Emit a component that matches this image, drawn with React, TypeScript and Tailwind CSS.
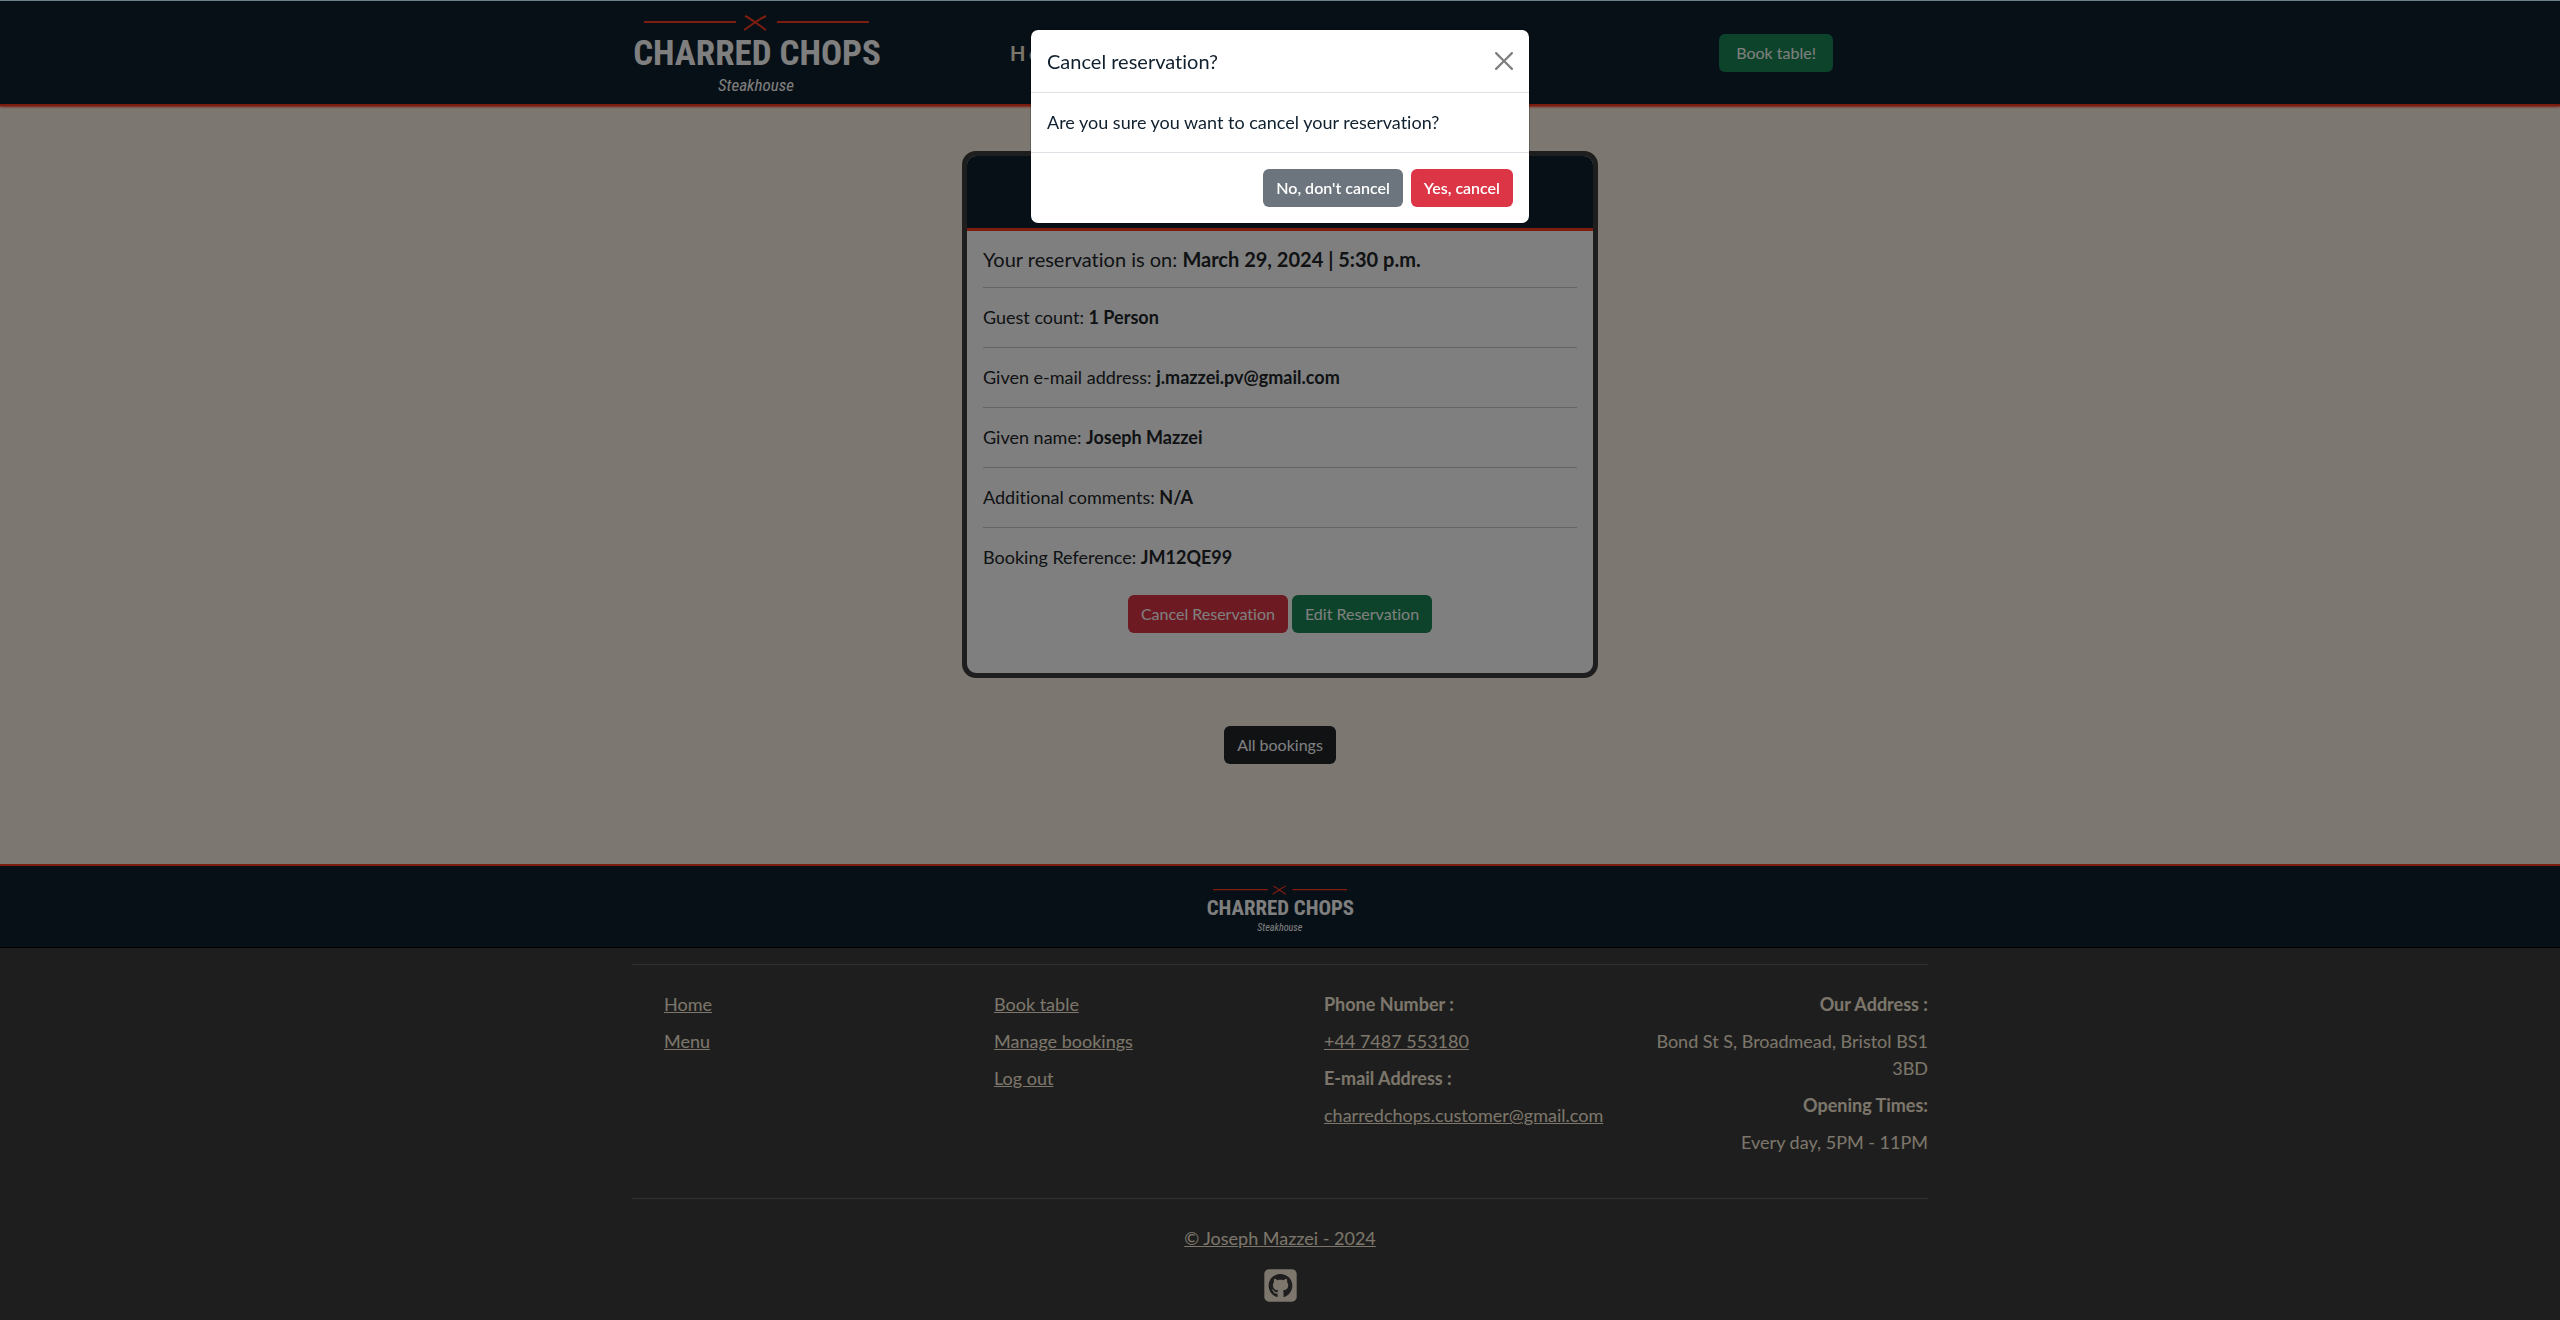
import React from "react";
import { FaSquareGithub } from "react-icons/fa6";

function Logo({ className }: { className: string }) {
  return (
    <svg viewBox="0 0 250 84" className={className} role="img" aria-label="Charred Chops Steakhouse">
      <g stroke="#f83a20" strokeWidth="2" fill="none">
        <path d="M12 11H104M145 11H237" />
        <path d="M113 5C118 7 128 15 134 19M134 5C129 7 118 15 112 19" />
      </g>
      <text
        x="125"
        y="54"
        textAnchor="middle"
        fontSize="35"
        fontWeight="700"
        fill="#ffffff"
        fontFamily="'Roboto Condensed', 'Liberation Sans Narrow', 'Liberation Sans', sans-serif"
      >
        CHARRED CHOPS
      </text>
      <text
        x="124"
        y="80"
        textAnchor="middle"
        fontSize="17"
        fontStyle="italic"
        fill="#ffffff"
        fontFamily="'Roboto Condensed', 'Liberation Sans Narrow', 'Liberation Sans', sans-serif"
      >
        Steakhouse
      </text>
    </svg>
  );
}

const details = [
  ["Guest count:", "1 Person"],
  ["Given e-mail address:", "j.mazzei.pv@gmail.com"],
  ["Given name:", "Joseph Mazzei"],
  ["Additional comments:", "N/A"],
  ["Booking Reference:", "JM12QE99"],
];

function Header() {
  return (
    <header className="relative border-b-2 border-[#f83a20] bg-[#10202e] shadow-[0_1px_2px_#f83a20]">
      <div className="mx-auto flex h-[103px] max-w-[1320px] items-center px-3">
        <a href="#" className="block">
          <Logo className="w-[250px]" />
        </a>
        <nav className="ml-32">
          <a href="#" className="text-[20px] leading-[30px] tracking-[4px] font-bold text-[#f8ecd8]">
            Home
          </a>
        </nav>
        <button className="mr-[95px] ml-auto h-[38px] rounded-md bg-[#198754] px-[17px] text-base text-white">
          Book table!
        </button>
      </div>
    </header>
  );
}

function ReservationCard() {
  return (
    <section className="mx-auto w-full max-w-[636px] overflow-hidden rounded-[14px] border-[5px] border-[#3c3c3c] bg-white text-[#212529]">
      <div className="h-[75px] border-b-[3px] border-[#f83a20] bg-[#10202e]" />
      <div className="px-4 pt-4 pb-10">
        <h2 className="text-[20px] leading-6">
          Your reservation is on: <strong>March 29, 2024 | 5:30 p.m.</strong>
        </h2>
        {details.map(([label, value]) => (
          <div key={label} className="mt-4 border-t border-[#c8c9ca] pt-4 leading-[27px]">
            <p>
              {label} <strong>{value}</strong>
            </p>
          </div>
        ))}
        <div className="mt-6 flex justify-center gap-1 text-base text-white">
          <button className="h-[38px] rounded-md bg-[#dc3545] px-[13px]">Cancel Reservation</button>
          <button className="h-[38px] rounded-md bg-[#198754] px-[13px]">Edit Reservation</button>
        </div>
      </div>
    </section>
  );
}

function Footer() {
  return (
    <footer className="grow bg-[#3c3c3c] text-[#f8ecd8]">
      <div className="flex justify-center border-t-2 border-b border-t-[#f83a20] border-b-black bg-[#10202e] pt-[17px] pb-[14px]">
        <Logo className="h-[50px]" />
      </div>
      <div className="mx-auto max-w-[1320px] px-3 pt-4">
        <div className="border-y border-[#626262] pt-[26px] pb-[42px]">
          <div className="-mx-3 grid grid-cols-4 leading-[27px]">
            <ul className="space-y-[10px] pl-11">
              <li><a href="#" className="underline">Home</a></li>
              <li><a href="#" className="underline">Menu</a></li>
            </ul>
            <ul className="space-y-[10px] pl-11">
              <li><a href="#" className="underline">Book table</a></li>
              <li><a href="#" className="underline">Manage bookings</a></li>
              <li><a href="#" className="underline">Log out</a></li>
            </ul>
            <ul className="space-y-[10px] pl-11">
              <li className="font-bold">Phone Number :</li>
              <li><a href="#" className="underline">+44 7487 553180</a></li>
              <li className="font-bold">E-mail Address :</li>
              <li><a href="#" className="underline">charredchops.customer@gmail.com</a></li>
            </ul>
            <ul className="space-y-[10px] pr-3 pl-11 text-right">
              <li className="font-bold">Our Address :</li>
              <li>Bond St S, Broadmead, Bristol BS1 3BD</li>
              <li className="font-bold">Opening Times:</li>
              <li>Every day, 5PM - 11PM</li>
            </ul>
          </div>
        </div>
        <div className="flex flex-col items-center pt-[26px] leading-[27px]">
          <a href="#" className="underline">© Joseph Mazzei - 2024</a>
          <a href="#" aria-label="GitHub" className="mt-[15px]">
            <FaSquareGithub size={37} />
          </a>
        </div>
      </div>
    </footer>
  );
}

function CancelDialog() {
  return (
    <div className="fixed inset-0 flex items-start justify-center bg-black/50 pt-[29px]">
      <div
        role="dialog"
        aria-labelledby="dialog-title"
        className="w-full max-w-[500px] rounded-lg border border-black/20 bg-white bg-clip-padding text-[#10202e]"
      >
        <div className="flex items-center justify-between border-b border-[#dee2e6] p-4">
          <h1 id="dialog-title" className="text-[20px] leading-[30px]">Cancel reservation?</h1>
          <button aria-label="Close" className="text-black opacity-50">
            <svg viewBox="0 0 16 16" className="size-[18px]" fill="currentColor">
              <path d="M.293.293a1 1 0 0 1 1.414 0L8 6.586 14.293.293a1 1 0 1 1 1.414 1.414L9.414 8l6.293 6.293a1 1 0 0 1-1.414 1.414L8 9.414l-6.293 6.293a1 1 0 0 1-1.414-1.414L6.586 8 .293 1.707a1 1 0 0 1 0-1.414z" />
            </svg>
          </button>
        </div>
        <p className="border-b border-[#dee2e6] p-4 leading-[27px]">
          Are you sure you want to cancel your reservation?
        </p>
        <div className="flex justify-end gap-2 p-4 text-base font-semibold text-white">
          <button className="h-[38px] rounded-md bg-[#6c757d] px-[13px]">No, don't cancel</button>
          <button className="h-[38px] rounded-md bg-[#dc3545] px-[13px]">Yes, cancel</button>
        </div>
      </div>
    </div>
  );
}

export default function App() {
  return (
    <div className="flex min-h-screen flex-col bg-[#f8efe0] font-['Lato',sans-serif] text-[18px] [font-variant-ligatures:none]">
      <div className="relative z-10 h-px bg-[#6c828a]" />
      <Header />
      <main className="flex flex-col items-center px-3 pt-[45px] pb-[100px]">
        <ReservationCard />
        <button className="mt-12 h-[38px] rounded-md bg-[#212529] px-[13px] text-base text-white">
          All bookings
        </button>
      </main>
      <Footer />
      <CancelDialog />
    </div>
  );
}
